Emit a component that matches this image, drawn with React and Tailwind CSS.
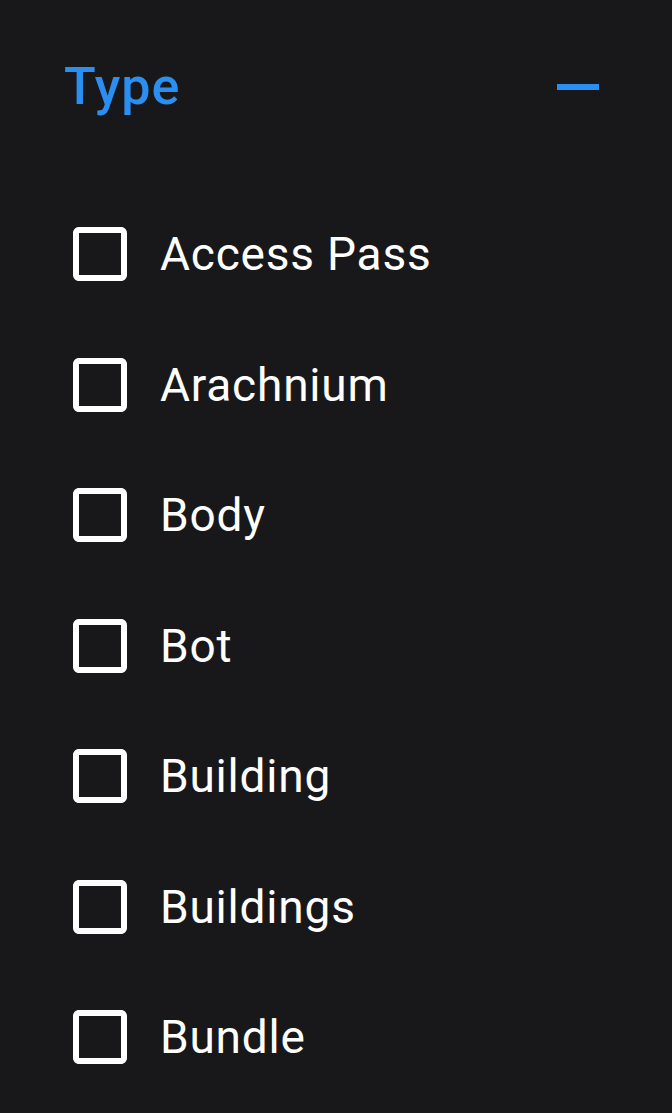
import React, { useState } from "react";

const types = ["Access Pass", "Arachnium", "Body", "Bot", "Building", "Buildings", "Bundle"];

const BoxIcon = ({ checked }) => (
    <svg viewBox="0 0 24 24" className="w-[72px] h-[72px] shrink-0" fill="currentColor">
        {checked ? (
            <path d="M19 3H5c-1.11 0-2 .9-2 2v14c0 1.1.89 2 2 2h14c1.11 0 2-.9 2-2V5c0-1.1-.89-2-2-2zm-9 14l-5-5 1.41-1.41L10 14.17l7.59-7.59L19 8l-9 9z" />
        ) : (
            <path d="M19 5v14H5V5h14m0-2H5c-1.11 0-2 .9-2 2v14c0 1.1.89 2 2 2h14c1.1 0 2-.9 2-2V5c0-1.1-.9-2-2-2z" />
        )}
    </svg>
);

const App = () => {
    const [checked, setChecked] = useState({});

    return (
        <div className="min-h-screen bg-[#18181b] text-white pl-[64px] pr-[58px]" style={{ fontFamily: "Roboto, sans-serif" }}>
            <div className="pt-[51px] h-[123px] flex items-center justify-between">
                <span className="text-[52px] font-medium tracking-[1px] text-[#2a8ff0] leading-none">Type</span>
                <svg viewBox="0 0 24 24" className="w-[72px] h-[72px] text-[#2a8ff0]" fill="currentColor">
                    <path d="M19 13H5v-2h14v2z" />
                </svg>
            </div>
            <div className="mt-[66px] flex flex-col">
                {types.map((t) => (
                    <label key={t} className="h-[130.5px] flex items-center gap-[24px] cursor-pointer">
                        <input
                            type="checkbox"
                            className="hidden"
                            checked={!!checked[t]}
                            onChange={() => setChecked((p) => ({ ...p, [t]: !p[t] }))}
                        />
                        <BoxIcon checked={!!checked[t]} />
                        <span className="text-[46px] tracking-[0.8px] leading-none">{t}</span>
                    </label>
                ))}
            </div>
        </div>
    );
};

export default App;
